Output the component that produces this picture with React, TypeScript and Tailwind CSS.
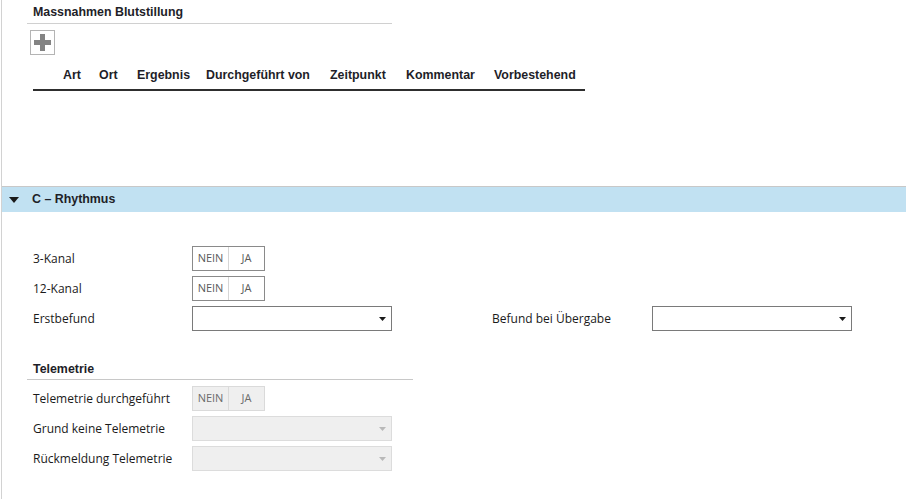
import React from "react";

const font = "font-['Liberation_Sans','Arial',sans-serif]";
const labelFont = "font-['Open_Sans','Liberation_Sans',sans-serif]";

function Toggle({ disabled = false }: { disabled?: boolean }) {
  return (
    <div
      className={`flex h-[25px] w-[73px] text-[11px] ${labelFont} ${
        disabled
          ? "border border-[#dadada] bg-[#efefef] text-[#6b6b6b]"
          : "border border-[#8a8a8a] bg-white text-[#5a5a5a]"
      }`}
    >
      <span
        className={`flex w-[36px] items-center justify-center border-r ${
          disabled ? "border-[#dadada]" : "border-[#d6d6d6]"
        }`}
      >
        NEIN
      </span>
      <span className="flex flex-1 items-center justify-center">JA</span>
    </div>
  );
}

function Select({ disabled = false }: { disabled?: boolean }) {
  return (
    <div
      className={`flex h-[25px] w-[200px] items-center justify-end pr-[5px] ${
        disabled ? "border border-[#dcdcdc] bg-[#efefef]" : "border border-[#7a7a7a] bg-white"
      }`}
    >
      <svg width="7" height="4" viewBox="0 0 7 4" aria-hidden="true">
        <path d="M0 0h7L3.5 4z" fill={disabled ? "#b9b9b9" : "#1a1a1a"} />
      </svg>
    </div>
  );
}

function Label({ children, className = "w-[159px]" }: { children: React.ReactNode; className?: string }) {
  return <span className={`${className} ${labelFont} text-[12px] text-[#1a1a1a]`}>{children}</span>;
}

function Row({ label, children }: { label: string; children: React.ReactNode }) {
  return (
    <div className="flex h-[25px] items-center">
      <Label>{label}</Label>
      {children}
    </div>
  );
}

const columns = [
  { label: "Art", w: "w-[36px]" },
  { label: "Ort", w: "w-[38px]" },
  { label: "Ergebnis", w: "w-[69px]" },
  { label: "Durchgeführt von", w: "w-[124px]" },
  { label: "Zeitpunkt", w: "w-[76px]" },
  { label: "Kommentar", w: "w-[88px]" },
  { label: "Vorbestehend", w: "w-[91px]" },
];

export default function App() {
  return (
    <div className={`h-[499px] w-[906px] overflow-hidden bg-white ${font}`}>
      <div className="ml-[1px] h-full border-l border-[#d2d2d2]">
        {/* Massnahmen Blutstillung */}
        <section className="pl-[25px]">
          <div className="w-[365px] border-b border-[#d0d0d0] pb-[3px] pl-[6px] pt-[4px]">
            <h3 className="text-[12.4px] font-bold leading-[16px] text-[#1e1e28]">Massnahmen Blutstillung</h3>
          </div>
          <button className="ml-[3px] mt-[6px] flex size-[25px] items-center justify-center border border-[#b4b4b4] bg-white">
            <svg width="17" height="17" viewBox="0 0 17 17" aria-hidden="true">
              <path d="M6 0h5v6h6v5h-6v6H6v-6H0V6h6z" fill="#838383" />
            </svg>
          </button>
          <div className="ml-[6px] flex h-[36px] w-[552px] items-center border-b-2 border-[#2e2e2e] pl-[30px] pt-[6px] text-[12.4px] font-bold text-[#1e1e28]">
            {columns.map((c) => (
              <span key={c.label} className={`${c.w} shrink-0 whitespace-nowrap`}>
                {c.label}
              </span>
            ))}
          </div>
        </section>

        {/* C - Rhythmus */}
        <div className="mt-[95px] flex h-[26px] items-center border-t border-[#c8c8c8] bg-[#c1e1f2] pl-[7px]">
          <svg width="10" height="6" viewBox="0 0 10 6" aria-hidden="true">
            <path d="M0 0h10L5 6z" fill="#1a1a1a" />
          </svg>
          <span className="ml-[13px] text-[12.4px] font-bold text-[#1e1e28]">C – Rhythmus</span>
        </div>

        <section className="mt-[34px] flex flex-col gap-[5px] pl-[31px]">
          <Row label="3-Kanal">
            <Toggle />
          </Row>
          <Row label="12-Kanal">
            <Toggle />
          </Row>
          <div className="flex h-[25px] items-center">
            <Label>Erstbefund</Label>
            <Select />
            <Label className="ml-[100px] w-[160px]">Befund bei Übergabe</Label>
            <Select />
          </div>
        </section>

        {/* Telemetrie */}
        <section className="mt-[30px] pl-[25px]">
          <div className="w-[386px] border-b border-[#c8c8c8] pb-[2px] pl-[6px]">
            <h3 className="text-[12.4px] font-bold leading-[16px] text-[#1e1e28]">Telemetrie</h3>
          </div>
          <div className="mt-[6px] flex flex-col gap-[5px] pl-[6px]">
            <Row label="Telemetrie durchgeführt">
              <Toggle disabled />
            </Row>
            <Row label="Grund keine Telemetrie">
              <Select disabled />
            </Row>
            <Row label="Rückmeldung Telemetrie">
              <Select disabled />
            </Row>
          </div>
        </section>
      </div>
    </div>
  );
}
